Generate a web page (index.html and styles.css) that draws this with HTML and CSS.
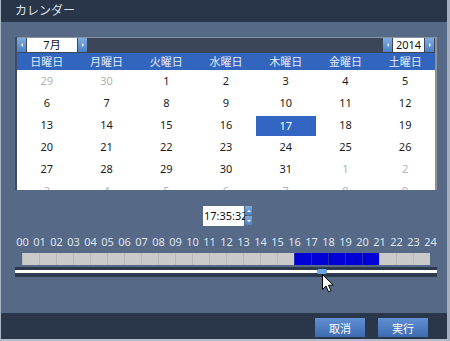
FILE: index.html
```html
<!DOCTYPE html>
<html lang="ja">
<head>
  <meta charset="UTF-8" />
  <title>カレンダー</title>
  <link rel="stylesheet" href="styles.css">
</head>
<body>
  <div class="window">
    <div class="titlebar">カレンダー</div>

    <div class="content">
      <div class="calendar">
        <div class="cal-nav">
          <div class="picker">
            <span class="arrow left"></span>
            <span class="field month">7月</span>
            <span class="arrow right"></span>
          </div>
          <div class="picker">
            <span class="arrow left"></span>
            <span class="field year">2014</span>
            <span class="arrow right"></span>
          </div>
        </div>

        <div class="weekdays">
          <span>日曜日</span><span>月曜日</span><span>火曜日</span><span>水曜日</span>
          <span>木曜日</span><span>金曜日</span><span>土曜日</span>
        </div>

        <div class="days">
          <span class="other">29</span><span class="other">30</span><span>1</span><span>2</span><span>3</span><span>4</span><span>5</span>
          <span>6</span><span>7</span><span>8</span><span>9</span><span>10</span><span>11</span><span>12</span>
          <span>13</span><span>14</span><span>15</span><span>16</span><span class="selected">17</span><span>18</span><span>19</span>
          <span>20</span><span>21</span><span>22</span><span>23</span><span>24</span><span>25</span><span>26</span>
          <span>27</span><span>28</span><span>29</span><span>30</span><span>31</span><span class="other">1</span><span class="other">2</span>
          <span class="other">3</span><span class="other">4</span><span class="other">5</span><span class="other">6</span><span class="other">7</span><span class="other">8</span><span class="other">9</span>
        </div>
      </div>

      <div class="time-row">
        <div class="time-field">17:35:32</div>
        <div class="spinner">
          <span class="spin up"></span>
          <span class="spin down"></span>
        </div>
      </div>

      <div class="hours">
        <span>00</span><span>01</span><span>02</span><span>03</span><span>04</span>
        <span>05</span><span>06</span><span>07</span><span>08</span><span>09</span>
        <span>10</span><span>11</span><span>12</span><span>13</span><span>14</span>
        <span>15</span><span>16</span><span>17</span><span>18</span><span>19</span>
        <span>20</span><span>21</span><span>22</span><span>23</span><span>24</span>
      </div>

      <div class="timeline">
        <span></span><span></span><span></span><span></span><span></span><span></span>
        <span></span><span></span><span></span><span></span><span></span><span></span>
        <span></span><span></span><span></span><span></span>
        <span class="on"></span><span class="on"></span><span class="on"></span><span class="on"></span><span class="on"></span>
        <span></span><span></span><span></span>
      </div>

      <div class="slider">
        <span class="thumb"></span>
        <svg class="cursor" width="13" height="19" viewBox="0 0 13 19">
          <path d="M0.5 0.5 L0.5 15.5 L4 12 L6.5 17.8 L9 16.8 L6.5 11.2 L11.3 11.2 Z" fill="#fff" stroke="#000" stroke-width="1" stroke-linejoin="round"/>
        </svg>
      </div>
    </div>

    <div class="footer">
      <button class="btn">取消</button>
      <button class="btn">実行</button>
    </div>
  </div>
</body>
</html>
```

FILE: styles.css
```css
body {
  margin: 0;
  font-family: "Noto Sans", "Noto Sans CJK JP", sans-serif;
  font-size: 11px;
}

.window {
  width: 450px;
  height: 341px;
  box-sizing: border-box;
  border-left: 1px solid #a9b4c4;
  border-right: 3px solid #a3aebe;
  border-bottom: 2px solid #b4bdca;
  display: flex;
  flex-direction: column;
  background: #566987;
}

.titlebar {
  height: 22px;
  line-height: 22px;
  padding-left: 14px;
  background: #29364a;
  color: #dce1ea;
  font-size: 12px;
}

.content {
  height: 291px;
  box-sizing: border-box;
  padding: 15px 10px 0 14px;
}

.calendar {
  width: 422px;
  box-sizing: border-box;
  border-left: 2px solid #414d5e;
  border-right: 2px solid #8e9197;
}

.cal-nav {
  height: 16px;
  box-sizing: border-box;
  border-top: 1px solid #8792a2;
  background: #3b4658;
  display: flex;
  justify-content: space-between;
  padding-right: 1px;
}

.picker {
  display: flex;
  gap: 1px;
}

.arrow {
  width: 9px;
  height: 14px;
  background: linear-gradient(#80acde, #4c80c6);
  display: flex;
  align-items: center;
  justify-content: center;
}

.arrow::before {
  content: "";
  border-top: 2px solid transparent;
  border-bottom: 2px solid transparent;
}

.arrow.left::before {
  border-right: 2px solid #fff;
}

.arrow.right::before {
  border-left: 2px solid #fff;
}

.field {
  height: 14px;
  line-height: 14px;
  background: #fff;
  color: #111;
  text-align: center;
}

.field.month {
  width: 50px;
}

.field.year {
  width: 31px;
}

.weekdays {
  height: 17px;
  background: #3266be;
  display: grid;
  grid-template-columns: repeat(7, 1fr);
  color: #e6ecf7;
}

.weekdays span {
  line-height: 17px;
  text-align: center;
}

.days {
  height: 120px;
  overflow: hidden;
  background: #fff;
  display: grid;
  grid-template-columns: repeat(7, 1fr);
  grid-auto-rows: 22px;
  color: #1c1c1c;
}

.days span {
  line-height: 22px;
  text-align: center;
}

.days .other {
  color: #b2b2b2;
}

.days .selected {
  background: #3266c2;
  color: #fff;
  margin-top: 2px;
  line-height: 20px;
}

.time-row {
  margin: 16px 0 0 188px;
  display: flex;
  gap: 1px;
}

.time-field {
  width: 41px;
  height: 20px;
  line-height: 20px;
  box-sizing: border-box;
  background: #fff;
  color: #111;
  padding-left: 1px;
  font-size: 11px;
}

.spinner {
  display: flex;
  flex-direction: column;
  gap: 1px;
}

.spin {
  width: 7px;
  height: 9px;
  background: linear-gradient(#80acde, #4c80c6);
  display: flex;
  align-items: center;
  justify-content: center;
}

.spin::before {
  content: "";
  border-left: 2px solid transparent;
  border-right: 2px solid transparent;
}

.spin.up::before {
  border-bottom: 2px solid #fff;
}

.spin.down::before {
  border-top: 2px solid #fff;
}

.hours {
  margin: 9px 0 0 -1px;
  display: grid;
  grid-template-columns: repeat(25, 17px);
  color: #dfe5ef;
  line-height: 14px;
}

.hours span {
  text-align: center;
}

.timeline {
  margin: 4px 0 0 7px;
  width: 408px;
  height: 12px;
  display: grid;
  grid-template-columns: repeat(24, 17px);
}

.timeline span {
  background: #cacaca;
  border-left: 1px solid #b9b9b9;
}

.timeline span.on {
  background: #0000d6;
  border-left-color: #2a2ab0;
}

.slider {
  position: relative;
  margin-top: 2px;
  width: 422px;
  height: 10px;
  box-sizing: border-box;
  background: #2d3a4d;
  border-top: 3px solid #2d3a4d;
}

.slider::before {
  content: "";
  display: block;
  height: 3px;
  background: #fff;
}

.thumb {
  position: absolute;
  left: 302px;
  top: -1px;
  width: 10px;
  height: 5px;
  border-radius: 2px;
  background: #6aa6e6;
}

.cursor {
  position: absolute;
  left: 307px;
  top: 4px;
}

.footer {
  height: 26px;
  background: #2a374b;
  display: flex;
  justify-content: flex-end;
  gap: 13px;
  padding: 5px 19px 0 0;
  box-sizing: border-box;
}

.btn {
  width: 50px;
  height: 19px;
  padding: 0;
  border: none;
  background: linear-gradient(#5f90d2, #3d6bb0);
  color: #fff;
  font-family: "Noto Sans CJK JP", sans-serif;
  font-size: 11px;
}
```
